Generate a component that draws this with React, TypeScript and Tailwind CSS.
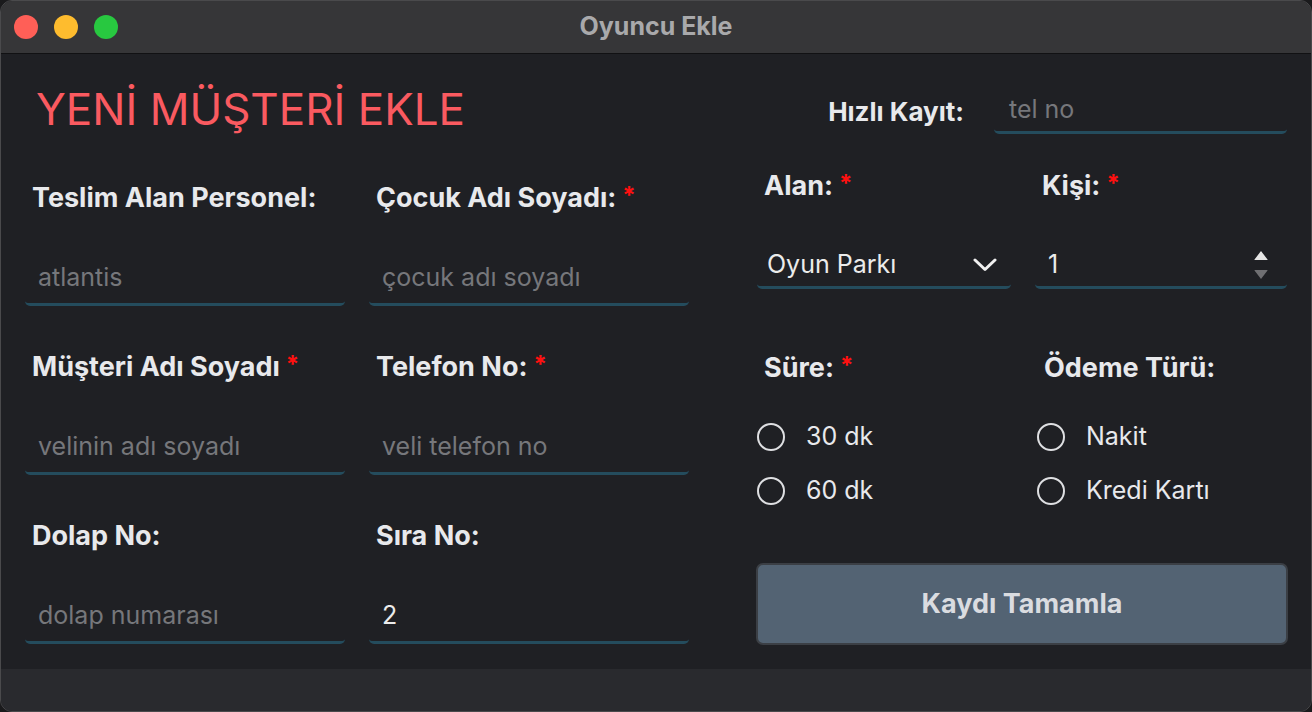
import React from 'react';

const font = "font-['Inter',sans-serif]";

function Star() {
  return <span className="ml-[6px] align-top text-[24px] font-bold leading-[26px] text-[#ff1010]">*</span>;
}

function FieldLabel({ text, required }: { text: string; required?: boolean }) {
  return (
    <div className="h-[30px] pl-[7px] text-[27px] font-bold leading-[30px] text-[#e8e9ec]">
      {text}
      {required && <Star />}
    </div>
  );
}

function TextField({ label, required, placeholder, value }: { label: string; required?: boolean; placeholder?: string; value?: string }) {
  return (
    <div className="flex flex-col">
      <FieldLabel text={label} required={required} />
      <div className="mt-[45px] flex h-[48px] items-center rounded-b-[5px] border-b-[3px] border-[#244c5d] pb-[6px] pl-[13px]">
        {value ? (
          <span className="text-[25px] text-[#ebebeb]">{value}</span>
        ) : (
          <span className="text-[25px] text-[#76777b]">{placeholder}</span>
        )}
      </div>
    </div>
  );
}

function Radio({ label }: { label: string }) {
  return (
    <div className="flex h-[40px] items-center">
      <span className="h-[28px] w-[28px] rounded-full border-2 border-[#dedfe2]" />
      <span className="ml-[21px] text-[25px] text-[#e8e9ec]">{label}</span>
    </div>
  );
}

export default function App() {
  return (
    <div className={`${font} h-[712px] w-[1312px] bg-[#1a1a1c]`}>
      <div className="flex h-[712px] w-[1312px] flex-col overflow-hidden rounded-[12px] border border-[#4a4a4c] bg-[#1f2024]">
        {/* title bar */}
        <div className="grid h-[53px] shrink-0 grid-cols-[1fr_auto_1fr] items-center border-b border-[#111113] bg-[#363638]">
          <div className="flex gap-[16px] pl-[13px]">
            <span className="h-[24px] w-[24px] rounded-full bg-[#ff5f57]" />
            <span className="h-[24px] w-[24px] rounded-full bg-[#febc2e]" />
            <span className="h-[24px] w-[24px] rounded-full bg-[#28c840]" />
          </div>
          <div className="text-[25px] font-bold text-[#a9a9ab]">Oyuncu Ekle</div>
          <div />
        </div>

        {/* content */}
        <div className="flex flex-1">
          <div className="w-[688px] pl-6 pt-[30px]">
            <h1 className="h-[50px] pl-[11px] text-[44px] leading-[50px] text-[#fa5a60]">YENİ MÜŞTERİ EKLE</h1>
            <div className="mt-[49px] grid grid-cols-[320px_320px] gap-x-6 gap-y-[46px]">
              <TextField label="Teslim Alan Personel:" placeholder="atlantis" />
              <TextField label="Çocuk Adı Soyadı:" required placeholder="çocuk adı soyadı" />
              <TextField label="Müşteri Adı Soyadı" required placeholder="velinin adı soyadı" />
              <TextField label="Telefon No:" required placeholder="veli telefon no" />
              <TextField label="Dolap No:" placeholder="dolap numarası" />
              <TextField label="Sıra No:" value="2" />
            </div>
          </div>

          <div className="ml-[68px] w-[530px] pt-[34px]">
            <div className="flex items-center justify-end gap-[30px]">
              <span className="text-[26px] font-bold text-[#e8e9ec]">Hızlı Kayıt:</span>
              <div className="flex h-[46px] w-[293px] items-center rounded-b-[5px] border-b-[3px] border-[#244c5d] pl-[15px]">
                <span className="text-[25px] text-[#76777b]">tel no</span>
              </div>
            </div>

            <div className="mt-[37px] grid grid-cols-[254px_252px] gap-x-6">
              <div className="flex flex-col">
                <FieldLabel text="Alan:" required />
                <div className="mt-[44px] flex h-[44px] items-center justify-between rounded-b-[5px] border-b-[3px] border-[#244c5d] pb-[2px] pl-[10px] pr-[14px]">
                  <span className="text-[25px] text-[#ebebeb]">Oyun Parkı</span>
                  <svg width="24" height="14" viewBox="0 0 24 14" fill="none">
                    <path d="M2 2 L12 11.5 L22 2" stroke="#f0f0f0" strokeWidth="3" strokeLinecap="round" strokeLinejoin="round" />
                  </svg>
                </div>
              </div>
              <div className="flex flex-col">
                <FieldLabel text="Kişi:" required />
                <div className="mt-[44px] flex h-[44px] items-center justify-between rounded-b-[5px] border-b-[3px] border-[#244c5d] pb-[2px] pl-[13px] pr-[18px]">
                  <span className="text-[25px] text-[#ebebeb]">1</span>
                  <svg width="16" height="32" viewBox="0 0 16 32">
                    <path d="M8 2 L14.5 10.5 Q15 11 14 11 L2 11 Q1 11 1.5 10.5 Z" fill="#e6e6e6" />
                    <path d="M2 21 L14 21 Q15 21 14.5 21.5 L8 30 L1.5 21.5 Q1 21 2 21 Z" fill="#6f6f72" />
                  </svg>
                </div>
              </div>
            </div>

            <div className="mt-[64px] grid grid-cols-[254px_252px] gap-x-6">
              <div className="flex flex-col">
                <FieldLabel text="Süre:" required />
                <div className="mt-[34px] flex flex-col gap-[14px]">
                  <Radio label="30 dk" />
                  <Radio label="60 dk" />
                </div>
              </div>
              <div className="flex flex-col">
                <div className="pl-[2px]">
                  <FieldLabel text="Ödeme Türü:" />
                </div>
                <div className="mt-[34px] flex flex-col gap-[14px] pl-[2px]">
                  <Radio label="Nakit" />
                  <Radio label="Kredi Kartı" />
                </div>
              </div>
            </div>

            <button className="-ml-px mt-[52px] flex h-[82px] w-[532px] items-center justify-center rounded-[7px] border-2 border-[#3b3f45] bg-[#536373] text-[27px] font-bold text-[#dadce0]">
              Kaydı Tamamla
            </button>
          </div>
        </div>

        {/* status bar */}
        <div className="h-[42px] shrink-0 bg-[#292a2e]" />
      </div>
    </div>
  );
}
